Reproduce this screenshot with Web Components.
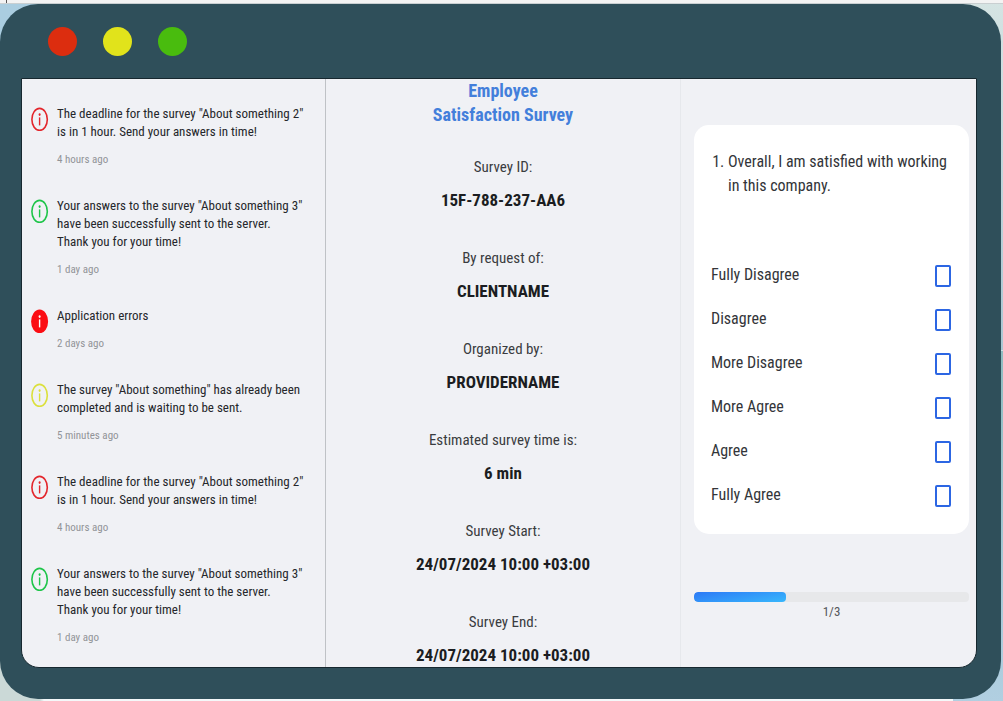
<!DOCTYPE html>
<html lang="en">
<head>
<meta charset="utf-8">
<title>Employee Satisfaction Survey</title>
<style>
  body {
    margin: 0;
    font-family: "Roboto Condensed", "Liberation Sans Narrow", Lato, sans-serif;
    color: #25272b;
  }
</style>
</head>
<body>

<survey-window>
  <notice-list>
    <notice-item type="alert" time="4 hours ago">The deadline for the survey "About something 2"<br>is in 1 hour. Send your answers in time!</notice-item>
    <notice-item type="success" time="1 day ago">Your answers to the survey "About something 3"<br>have been successfully sent to the server.<br>Thank you for your time!</notice-item>
    <notice-item type="error" time="2 days ago">Application errors</notice-item>
    <notice-item type="warning" time="5 minutes ago">The survey "About something" has already been<br>completed and is waiting to be sent.</notice-item>
    <notice-item type="alert" time="4 hours ago">The deadline for the survey "About something 2"<br>is in 1 hour. Send your answers in time!</notice-item>
    <notice-item type="success" time="1 day ago">Your answers to the survey "About something 3"<br>have been successfully sent to the server.<br>Thank you for your time!</notice-item>
  </notice-list>

  <survey-info>
    <span slot="title">Employee<br>Satisfaction Survey</span>
    <survey-field label="Survey ID:">15F-788-237-AA6</survey-field>
    <survey-field label="By request of:">CLIENTNAME</survey-field>
    <survey-field label="Organized by:">PROVIDERNAME</survey-field>
    <survey-field label="Estimated survey time is:">6 min</survey-field>
    <survey-field label="Survey Start:">24/07/2024 10:00 +03:00</survey-field>
    <survey-field label="Survey End:">24/07/2024 10:00 +03:00</survey-field>
  </survey-info>

  <survey-question value="1" max="3">
    <span slot="question">Overall, I am satisfied with working in this company.</span>
    <answer-option>Fully Disagree</answer-option>
    <answer-option>Disagree</answer-option>
    <answer-option>More Disagree</answer-option>
    <answer-option>More Agree</answer-option>
    <answer-option>Agree</answer-option>
    <answer-option>Fully Agree</answer-option>
  </survey-question>
</survey-window>

<script>
const survey_window = document.createElement('template');
survey_window.innerHTML = /*html*/ `
<style>
  :host {
    box-sizing: border-box;
    display: flex;
    flex-direction: column;
    min-height: 100vh;
    padding: 0 2px 2px 0;
    /* strip above the window, then the desktop behind its corners */
    background:
      linear-gradient(#555, #555) 6px 0 / 1px 3px no-repeat,
      linear-gradient(#f3f3f3 3px, #c9cfd1 3px) 0 0 / 100% 4px no-repeat,
      linear-gradient(#aacde0, #aacde0) 0 0 / 50% 50% no-repeat,
      linear-gradient(#d5e4e3, #a9c6d2) 100% 0 / 50% 50% no-repeat,
      linear-gradient(90deg, #cbd9d7 40px, #f4f8f9 44px) 0 100% / 50% 50% no-repeat,
      linear-gradient(#8fbcc0, #b1cfe1) 100% 100% / 50px 50% no-repeat,
      #f4f8f9;
  }

  #frame {
    flex: 1;
    display: flex;
    flex-direction: column;
    box-sizing: border-box;
    margin-top: 4px;
    padding: 0 24px 31px 21px;
    border-radius: 38px;
    background: #2f4f5a;
  }

  #titlebar {
    display: flex;
    align-items: center;
    gap: 26px;
    height: 74px;
    padding-left: 27px;
  }

  .light {
    width: 29px;
    height: 29px;
    border-radius: 50%;
  }

  .red { background: #dc2d0f; }
  .yellow { background: #e1e31b; }
  .green { background: #49bc0e; }

  #screen {
    flex: 1;
    display: grid;
    grid-template-columns: minmax(0, 304fr) minmax(0, 355fr) minmax(0, 295fr);
    border: 1px solid #17282f;
    border-radius: 0 0 18px 18px;
    background: #f0f1f5;
    overflow: hidden;
  }
</style>

<div id="frame">
  <div id="titlebar">
    <div class="light red"></div>
    <div class="light yellow"></div>
    <div class="light green"></div>
  </div>
  <div id="screen"><slot></slot></div>
</div>
`

const notice_list = document.createElement('template');
notice_list.innerHTML = /*html*/ `
<style>
  :host {
    display: flex;
    flex-direction: column;
    gap: 28px;
    padding: 26px 8px 0 9px;
    border-right: 1px solid #bfc2c6;
  }
</style>
<slot></slot>
`

const notice_item = document.createElement('template');
notice_item.innerHTML = /*html*/ `
<style>
  :host {
    display: flex;
    gap: 8px;
    --tone: #e3262c;
  }

  :host([type="success"]) { --tone: #1fc54a; }
  :host([type="warning"]) { --tone: #dbe03c; }
  :host([type="error"]) { --tone: #fb0d13; }

  svg {
    flex: none;
    width: 18px;
    height: 26px;
    stroke: var(--tone);
    fill: var(--tone);
  }

  .ring {
    fill: none;
    stroke-width: 1.6;
  }

  .stem { stroke: none; }

  :host([type="error"]) .ring { fill: var(--tone); }
  :host([type="error"]) .stem { fill: #fff; }

  #text {
    font-size: 13px;
    line-height: 18px;
    white-space: nowrap;
  }

  #time {
    margin-top: 10px;
    font-size: 11px;
    line-height: 18px;
    color: #929498;
  }
</style>

<svg viewBox="0 0 18 26" aria-hidden="true">
  <ellipse class="ring" cx="8.6" cy="14.4" rx="7.7" ry="11"/>
  <ellipse class="stem" cx="8.6" cy="9.6" rx="1" ry="1.4"/>
  <rect class="stem" x="7.9" y="12.4" width="1.4" height="8"/>
</svg>
<div>
  <div id="text"><slot></slot></div>
  <div id="time"></div>
</div>
`

const survey_info = document.createElement('template');
survey_info.innerHTML = /*html*/ `
<style>
  :host {
    display: block;
    text-align: center;
    border-right: 1px solid #e6e8ec;
  }

  h1 {
    margin: 0 0 28px;
    font-size: 18px;
    line-height: 24px;
    color: #437fdb;
  }

  #fields {
    display: flex;
    flex-direction: column;
    gap: 34px;
  }
</style>
<h1><slot name="title"></slot></h1>
<div id="fields"><slot></slot></div>
`

const survey_field = document.createElement('template');
survey_field.innerHTML = /*html*/ `
<style>
  :host {
    display: flex;
    flex-direction: column;
    gap: 9px;
    line-height: 24px;
  }

  #label {
    font-size: 15px;
    color: #3a3c40;
  }

  #value {
    font-size: 17px;
    font-weight: bold;
    color: #1b1d21;
  }
</style>
<div id="label"></div>
<div id="value"><slot></slot></div>
`

const survey_question = document.createElement('template');
survey_question.innerHTML = /*html*/ `
<style>
  :host {
    display: block;
    padding: 46px 7px 0 13px;
  }

  #card {
    padding: 25px 18px 16px 17px;
    border-radius: 15px;
    background: #fff;
  }

  ol {
    margin: 0 0 56px;
    padding-left: 17px;
    font-size: 16px;
    line-height: 24px;
    color: #333539;
  }

  progress {
    appearance: none;
    display: block;
    width: 100%;
    height: 10px;
    margin-top: 58px;
    border: none;
    border-radius: 4px;
    overflow: hidden;
    background: #e7e8ea;
  }

  progress::-webkit-progress-bar { background: #e7e8ea; }

  progress::-webkit-progress-value {
    border-radius: 4px;
    background: linear-gradient(170deg, #2c79f6, #38b7fc);
  }

  #count {
    display: block;
    font-size: 13px;
    line-height: 20px;
    text-align: center;
    color: #55575b;
  }
</style>

<div id="card">
  <ol><li><slot name="question"></slot></li></ol>
  <slot></slot>
</div>
<progress id="progress" aria-labelledby="count"></progress>
<label id="count" for="progress"></label>
`

const answer_option = document.createElement('template');
answer_option.innerHTML = /*html*/ `
<style>
  :host { display: block; }

  label {
    display: flex;
    align-items: center;
    justify-content: space-between;
    height: 44px;
    font-size: 16px;
    color: #333539;
  }

  span { padding-bottom: 4px; }

  input {
    appearance: none;
    box-sizing: border-box;
    width: 16px;
    height: 22px;
    margin: 0;
    border: 2px solid #2c66e3;
    border-radius: 2px;
  }

  input:checked { background: #2c66e3; }
</style>
<label><span><slot></slot></span><input type="checkbox"></label>
`

class SurveyElement extends HTMLElement {
  constructor(template) {
    super();

    this.attachShadow({ mode: "open" });
    this.shadowRoot.appendChild(template.content.cloneNode(true));
  }

  find(id) {
    return this.shadowRoot.getElementById(id);
  }
}

class SurveyWindow extends SurveyElement {
  constructor() { super(survey_window); }
}

class NoticeList extends SurveyElement {
  constructor() { super(notice_list); }
}

class NoticeItem extends SurveyElement {
  constructor() { super(notice_item); }

  connectedCallback() {
    this.find('time').textContent = this.getAttribute('time');
  }
}

class SurveyInfo extends SurveyElement {
  constructor() { super(survey_info); }
}

class SurveyField extends SurveyElement {
  constructor() { super(survey_field); }

  connectedCallback() {
    this.find('label').textContent = this.getAttribute('label');
  }
}

class SurveyQuestion extends SurveyElement {
  constructor() { super(survey_question); }

  connectedCallback() {
    const value = this.getAttribute('value');
    const max = this.getAttribute('max');

    this.find('progress').max = max;
    this.find('progress').value = value;
    this.find('count').textContent = value + '/' + max;
  }
}

class AnswerOption extends SurveyElement {
  constructor() { super(answer_option); }
}

window.customElements.define('survey-window', SurveyWindow);
window.customElements.define('notice-list', NoticeList);
window.customElements.define('notice-item', NoticeItem);
window.customElements.define('survey-info', SurveyInfo);
window.customElements.define('survey-field', SurveyField);
window.customElements.define('survey-question', SurveyQuestion);
window.customElements.define('answer-option', AnswerOption);
</script>
</body>
</html>
